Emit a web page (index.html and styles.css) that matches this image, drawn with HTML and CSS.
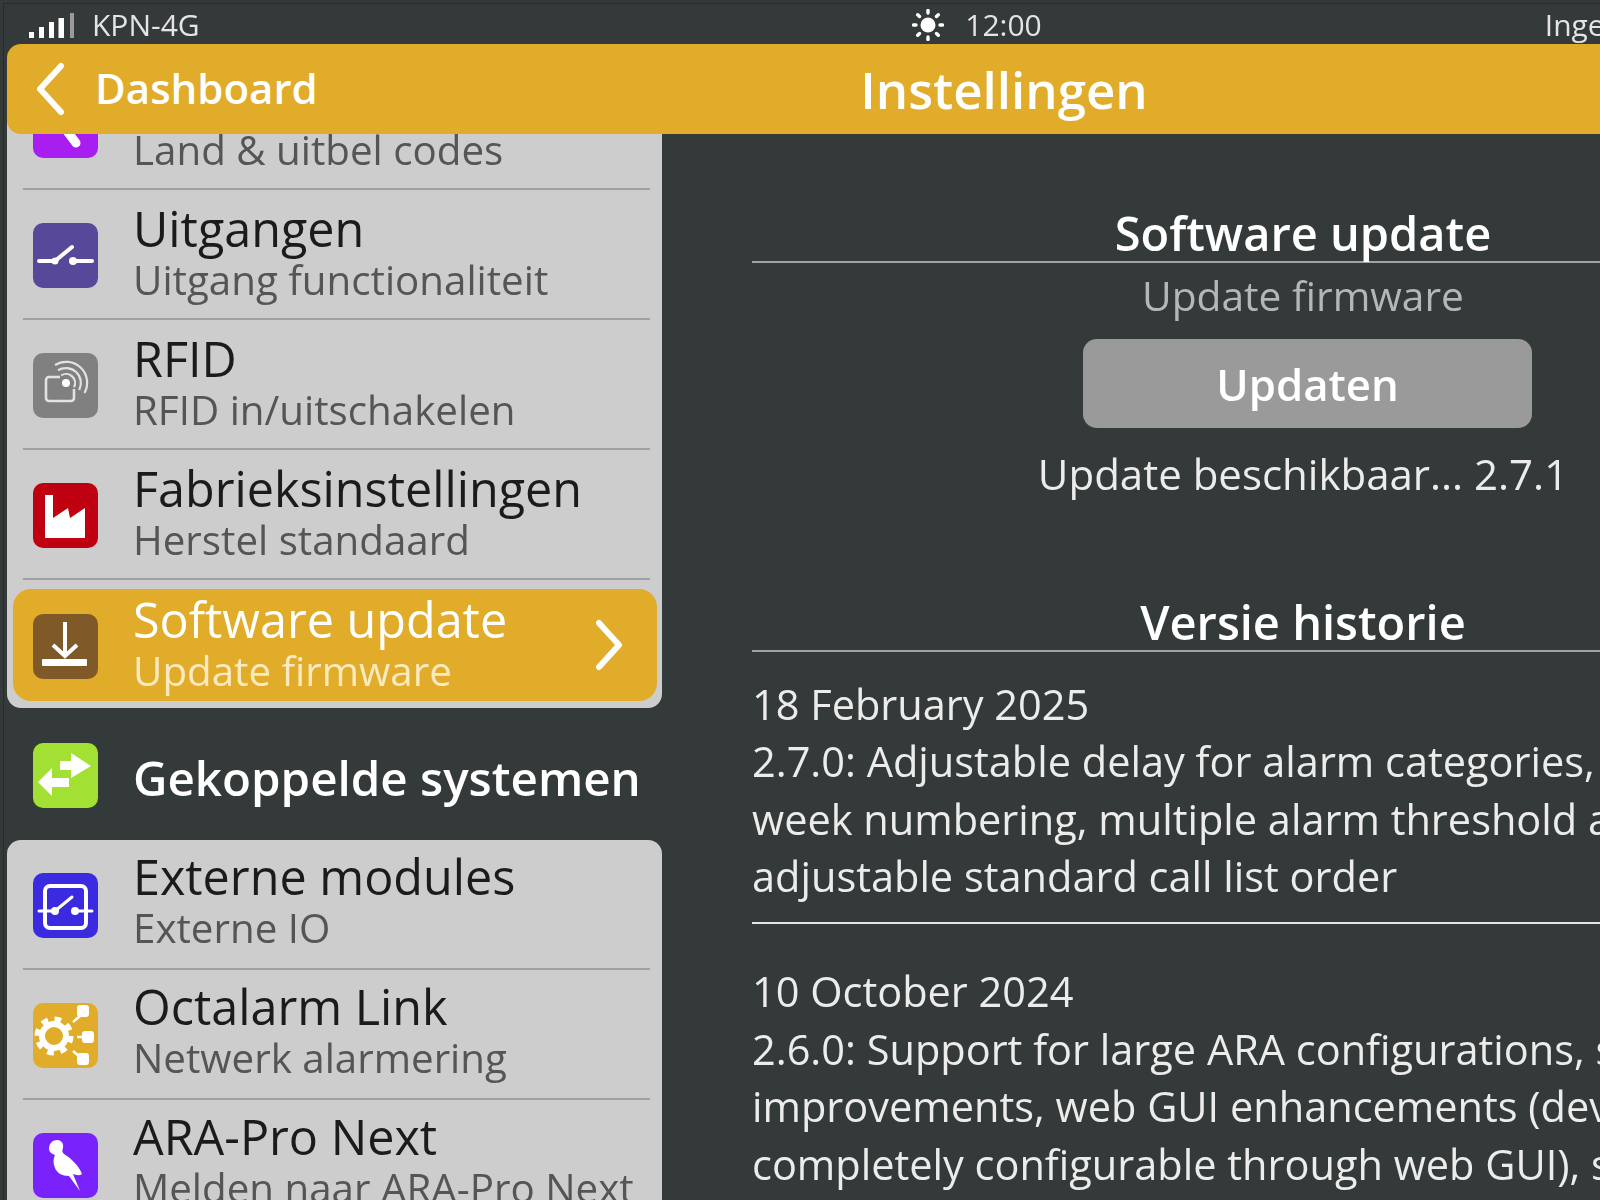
FILE: index.html
```html
<!DOCTYPE html>
<html>
<head>
  <meta charset="UTF-8">
  <meta name="viewport" content="width=device-width, initial-scale=1.0">
  <title>Instellingen</title>
  <link rel="stylesheet" href="styles.css">
</head>
<body>
  <div class="app">
    <div class="status-bar">
      <div class="status-left">
        <svg class="signal" width="46" height="26" viewBox="0 0 46 26">
          <rect x="0" y="20" width="5" height="6" fill="#fff"/>
          <rect x="10" y="15" width="5" height="11" fill="#fff"/>
          <rect x="20" y="10" width="5" height="16" fill="#fff"/>
          <rect x="29.5" y="6" width="5.5" height="20" fill="#fff"/>
          <rect x="41" y="1" width="4" height="25" fill="#9a9a9a"/>
        </svg>
        <span>KPN-4G</span>
      </div>
      <div class="status-center">
        <svg width="32" height="32" viewBox="0 0 32 32">
          <circle cx="16" cy="16" r="7.5" fill="#fff"/>
          <path d="M16 1.5v2.5M16 28v2.5M1.5 16h2.5M28 16h2.5M5.7 5.7l1.8 1.8M24.5 24.5l1.8 1.8M5.7 26.3l1.8-1.8M24.5 7.5l1.8-1.8" stroke="#fff" stroke-width="3.4" stroke-linecap="round"/>
        </svg>
        <span>12:00</span>
      </div>
      <div class="status-right">Ingelogd als Admin</div>
    </div>

    <div class="header">
      <div class="back">
        <svg width="32" height="54" viewBox="0 0 32 54">
          <path d="M27 4L6 27l21 23" fill="none" stroke="#fff" stroke-width="6" stroke-linecap="round" stroke-linejoin="round"/>
        </svg>
        <span class="back-label">Dashboard</span>
      </div>
      <div class="title">Instellingen</div>
    </div>

    <div class="main">
      <div class="sidebar">
        <div class="panel panel-scrolled">
          <div class="row">
            <div class="icon icon-magenta">
              <svg viewBox="0 0 65 65"><path d="M34 38l9 12" stroke="#fff" stroke-width="9" stroke-linecap="round"/></svg>
            </div>
            <div class="row-text">
              <div class="row-title">Taal &amp; regio</div>
              <div class="row-sub">Land &amp; uitbel codes</div>
            </div>
          </div>
          <div class="row">
            <div class="icon icon-purple">
              <svg viewBox="0 0 65 65">
                <path d="M6 38h16l17-14" fill="none" stroke="#fff" stroke-width="4" stroke-linecap="round"/>
                <path d="M40 38h19" stroke="#fff" stroke-width="4" stroke-linecap="round"/>
                <circle cx="22" cy="38" r="3.5" fill="#fff"/>
                <circle cx="40" cy="38" r="4" fill="#fff"/>
              </svg>
            </div>
            <div class="row-text">
              <div class="row-title">Uitgangen</div>
              <div class="row-sub">Uitgang functionaliteit</div>
            </div>
          </div>
          <div class="row">
            <div class="icon icon-grey">
              <svg viewBox="0 0 65 65">
                <path d="M27 24h-11a3 3 0 0 0-3 3v18a3 3 0 0 0 3 3h22a3 3 0 0 0 3-3v-9" fill="none" stroke="#e2e2e2" stroke-width="2.6"/>
                <circle cx="33" cy="30" r="4" fill="#fff"/>
                <path d="M28.2 22.4a9 9 0 0 1 12.8 11.8M25 17.3a15 15 0 0 1 21.2 19.7M22 12a21 21 0 0 1 29.5 28" fill="none" stroke="#e2e2e2" stroke-width="2.2"/>
              </svg>
            </div>
            <div class="row-text">
              <div class="row-title">RFID</div>
              <div class="row-sub">RFID in/uitschakelen</div>
            </div>
          </div>
          <div class="row">
            <div class="icon icon-red">
              <svg viewBox="0 0 65 65"><path d="M12 12h8v23l15-10 2 10 15-10v30H12z" fill="#fff"/></svg>
            </div>
            <div class="row-text">
              <div class="row-title">Fabrieksinstellingen</div>
              <div class="row-sub">Herstel standaard</div>
            </div>
          </div>
          <div class="row row-active">
            <div class="icon icon-brown">
              <svg viewBox="0 0 65 65">
                <path d="M32 8v33M20 31l12 11 12-11" fill="none" stroke="#fff" stroke-width="4"/>
                <rect x="9" y="45" width="45" height="7" rx="1" fill="#fff"/>
              </svg>
            </div>
            <div class="row-text">
              <div class="row-title">Software update</div>
              <div class="row-sub">Update firmware</div>
            </div>
            <svg class="chevron" width="30" height="52" viewBox="0 0 30 52">
              <path d="M5 4l20 22L5 48" fill="none" stroke="#fff" stroke-width="6" stroke-linecap="round" stroke-linejoin="round"/>
            </svg>
          </div>
        </div>

        <div class="section-row">
          <div class="icon icon-green">
            <svg viewBox="0 0 65 65">
              <path d="M27 18h11v-8l20 13-20 12v-8H27z" fill="#fff"/>
              <path d="M36 35v9H19v9L5 39l14-14v10z" fill="#fff"/>
            </svg>
          </div>
          <div class="section-title">Gekoppelde systemen</div>
        </div>

        <div class="panel panel-linked">
          <div class="row">
            <div class="icon icon-blue">
              <svg viewBox="0 0 65 65">
                <rect x="12" y="13" width="41" height="42" rx="5" fill="none" stroke="#fff" stroke-width="4"/>
                <path d="M6 38h16l17-14M42 38h17" fill="none" stroke="#fff" stroke-width="3" stroke-linecap="round"/>
                <circle cx="22" cy="38" r="4" fill="#fff"/>
                <circle cx="42" cy="38" r="4" fill="#fff"/>
              </svg>
            </div>
            <div class="row-text">
              <div class="row-title">Externe modules</div>
              <div class="row-sub">Externe IO</div>
            </div>
          </div>
          <div class="row">
            <div class="icon icon-amber">
              <svg viewBox="0 0 65 65">
                <circle cx="21" cy="33" r="12" fill="none" stroke="#fff" stroke-width="6"/>
                <circle cx="21" cy="33" r="17" fill="none" stroke="#fff" stroke-width="5" stroke-dasharray="6.7 6.65"/>
                <path d="M40 19l7-6M44 34h6M40 48l7 6" stroke="#fff" stroke-width="2.5"/>
                <rect x="44" y="2" width="12" height="12" rx="3" fill="#fff"/>
                <rect x="49" y="28" width="12" height="12" rx="3" fill="#fff"/>
                <rect x="44" y="50" width="12" height="12" rx="3" fill="#fff"/>
              </svg>
            </div>
            <div class="row-text">
              <div class="row-title">Octalarm Link</div>
              <div class="row-sub">Netwerk alarmering</div>
            </div>
          </div>
          <div class="row">
            <div class="icon icon-violet">
              <svg viewBox="0 0 65 65">
                <path d="M16 16c0-6 4-9 8-9s7 3 6 8c-1 3-1 4 1 6 8 5 15 12 18 20-3 2-6 1-9 0l7 17-11-15c-7 0-12-3-14-8-2-5-2-9 0-13-3-1-6-3-6-6z" fill="#fff"/>
              </svg>
            </div>
            <div class="row-text">
              <div class="row-title">ARA-Pro Next</div>
              <div class="row-sub">Melden naar ARA-Pro Next</div>
            </div>
          </div>
        </div>
      </div>

      <div class="content">
        <div class="block-head">Software update</div>
        <div class="block-sub">Update firmware</div>
        <div class="button">Updaten</div>
        <div class="update-note">Update beschikbaar... 2.7.1</div>

        <div class="block-head history-head">Versie historie</div>
        <div class="version">
          <p>18 February 2025</p>
          <p>2.7.0: Adjustable delay for alarm categories, improved call lists and</p>
          <p>week numbering, multiple alarm threshold adjustments and an</p>
          <p>adjustable standard call list order</p>
        </div>
        <div class="version">
          <p>10 October 2024</p>
          <p>2.6.0: Support for large ARA configurations, several performance</p>
          <p>improvements, web GUI enhancements (device settings are now</p>
          <p>completely configurable through web GUI), several bug fixes</p>
        </div>
      </div>
    </div>
  </div>
</body>
</html>
```

FILE: styles.css
```css
html, body {
  margin: 0;
  height: 100%;
  overflow: hidden;
  background-color: #343939;
}
body {
  padding: 3px 0 0 3px;
  box-sizing: border-box;
}
.app {
  width: 2000px;
  height: 1197px;
  box-sizing: border-box;
  padding-left: 3px;
  border-top: 1px solid #272b2b;
  border-left: 1px solid #272b2b;
  font-family: "Open Sans", sans-serif;
  color: #fff;
  display: flex;
  flex-direction: column;
  filter: blur(0.5px);
}

/* status bar */
.status-bar {
  height: 40px;
  flex-shrink: 0;
  display: grid;
  grid-template-columns: 1fr auto 1fr;
  align-items: center;
  font-size: 30px;
  color: #e4e4e4;
}
.status-left {
  display: flex;
  align-items: center;
  gap: 17px;
  padding-left: 22px;
}
.status-center {
  display: flex;
  align-items: center;
  gap: 21px;
  margin-right: 56px;
}
.status-right {
  padding-left: 447px;
  white-space: nowrap;
}

/* header */
.header {
  height: 90px;
  flex-shrink: 0;
  position: relative;
  z-index: 2;
  display: flex;
  align-items: center;
  justify-content: center;
  background-color: #e0ac2a;
  border-radius: 14px;
}
.back {
  position: absolute;
  left: 27px;
  top: 18px;
  display: flex;
  align-items: center;
  gap: 29px;
  font-size: 42px;
  font-weight: 600;
}
.back-label {
  line-height: 44px;
  margin-bottom: 3px;
}
.title {
  font-size: 51px;
  font-weight: 600;
  margin-right: 2px;
}

/* layout */
.main {
  flex: 1;
  display: flex;
  min-height: 0;
}
.sidebar {
  width: 655px;
  flex-shrink: 0;
}
.content {
  width: 1102px;
  margin-left: 90px;
  padding-top: 71px;
  flex-shrink: 0;
}

/* menu */
.panel {
  background-color: #cdcdcd;
  border-radius: 14px;
  padding: 0 6px;
}
.panel-scrolled {
  margin-top: -74px;
  padding-bottom: 7px;
}
.row {
  height: 128px;
  margin: 0 6px 0 10px;
  padding-left: 10px;
  border-bottom: 2px solid #9ea1a1;
  display: flex;
  align-items: center;
  gap: 35px;
}
.row:last-child {
  border-bottom: none;
}
.row .icon {
  margin-top: 3px;
}
.row-active {
  height: 112px;
  margin: 9px -1px 0 0;
  padding-left: 20px;
  background-color: #e0ac2a;
  border-radius: 18px;
}
.row-active .icon {
  margin-top: 2px;
}
.row-text {
  flex: 1;
  padding-bottom: 2px;
  color: #1b1b1b;
  white-space: nowrap;
}
.panel-linked .row-text {
  padding-bottom: 5px;
}
.row-title {
  font-size: 48.5px;
  line-height: 53px;
}
.row-sub {
  font-size: 40.3px;
  line-height: 50px;
  color: #555;
}
.row-active .row-title {
  color: #fff;
}
.row-active .row-sub {
  color: #fbeac0;
}
.chevron {
  margin-right: 33px;
}

.section-row {
  height: 132px;
  box-sizing: border-box;
  padding: 2px 0 0 26px;
  display: flex;
  align-items: center;
  gap: 35px;
}
.section-title {
  padding-top: 4px;
  font-size: 47.5px;
  font-weight: 600;
  white-space: nowrap;
}

/* icons */
.icon {
  width: 65px;
  height: 65px;
  flex-shrink: 0;
  border-radius: 10px;
  overflow: hidden;
}
.icon svg {
  display: block;
}
.icon-magenta { background-color: #a81ef0; }
.icon-purple { background-color: #57489a; }
.icon-grey { background-color: #808080; }
.icon-red { background-color: #bf0010; }
.icon-brown { background-color: #7f5a28; }
.icon-green { background-color: #a3e034; }
.icon-blue { background-color: #3a2be0; }
.icon-amber { background-color: #e0ac2a; }
.icon-violet { background-color: #7a22fb; }

/* right side */
.block-head {
  text-align: center;
  font-size: 47px;
  font-weight: 600;
  line-height: 56px;
  border-bottom: 2px solid #a0a3a3;
}
.block-sub {
  text-align: center;
  font-size: 40.7px;
  line-height: 64px;
  color: #b5b7b7;
}
.button {
  width: 449px;
  height: 89px;
  margin: 12px 0 0 331px;
  border-radius: 14px;
  background-color: #9a9a9a;
  font-size: 43.7px;
  font-weight: 600;
  display: flex;
  align-items: center;
  justify-content: center;
}
.update-note {
  text-align: center;
  font-size: 42px;
  line-height: 56px;
  margin-top: 18px;
  color: #ececec;
}
.history-head {
  margin-top: 92px;
}
.version {
  padding: 23.5px 0 16.5px;
  border-bottom: 2px solid #e6e6e6;
  margin-bottom: 15.5px;
  font-size: 41.5px;
  line-height: 57.5px;
  white-space: nowrap;
  color: #ececec;
}
.version p {
  margin: 0;
}
```
